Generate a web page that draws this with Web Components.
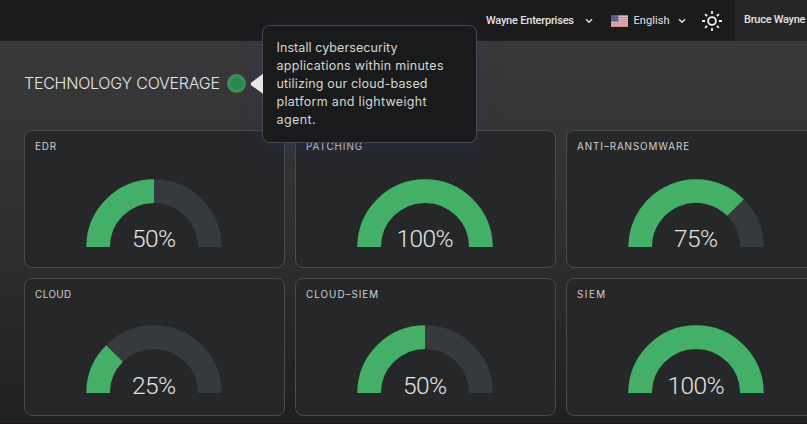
<!DOCTYPE html>
<html lang="en">
<head>
<meta charset="utf-8">
<title>Technology coverage</title>
<style>
html,body{margin:0;height:424px;overflow:hidden;background:#202021}
</style>
</head>
<body>
<coverage-app></coverage-app>
<script>
const define = (name, html, init) => customElements.define(name, class extends HTMLElement {
  connectedCallback() {
    if (this.shadowRoot) return;
    this.attachShadow({ mode: 'open' }).innerHTML = html;
    if (init) init.call(this, this.shadowRoot);
  }
});

// Single line of text whose tracking is tuned so that it fills the given width.
define('fit-text', `<style>:host{display:block;white-space:nowrap;width:max-content}span{display:inline-block}</style><span><slot></slot></span>`,
  function (root) {
    const span = root.querySelector('span');
    const n = this.textContent.length;
    const gap = (Number(this.getAttribute('width')) - span.getBoundingClientRect().width) / (n - 1);
    span.style.letterSpacing = gap.toFixed(3) + 'px';
    span.style.marginRight = (-gap).toFixed(3) + 'px';
  });

define('chevron-icon', `<style>:host{display:block;width:8px;height:6px}svg{display:block}</style>
<svg width="8" height="6" viewBox="0 0 8 6"><path d="M1 1.200 4 4.300 7 1.200" fill="none" stroke="#e2e2e2" stroke-width="1.4"/></svg>`);

define('flag-icon', `<style>:host{display:block;width:17px;height:12px}svg{display:block}</style>
<svg width="17" height="12" viewBox="0 0 17 12"><rect width="17" height="12" rx=".6" fill="#e9dadd"/>
<path d="M0 .5h17M0 2.4h17M0 4.3h17M0 6.2h17M0 8.1h17M0 10h17M0 11.8h17" stroke="#ce6674" stroke-width=".95"/>
<rect width="7.3" height="6.4" fill="#535a87"/><path d="M1 1.4h6M1 3.1h6M1 4.8h6" stroke="#8589aa" stroke-width=".6" stroke-dasharray=".7 .8"/></svg>`);

define('sun-icon', `<style>:host{display:block;width:20px;height:20px}svg{display:block}</style>
<svg width="20" height="20" viewBox="-10 -10 20 20" fill="none" stroke="#f2f2f2" stroke-width="1.8"><circle r="3.900"/>
<path d="M0-10v3M0 7v3M-10 0h3M7 0h3M-6.9-6.9l2 2M4.9 4.9l2 2M6.9-6.9l-2 2M-4.9 4.9l-2 2"/></svg>`);

define('top-bar', `<style>
:host{display:flex;height:41px;box-sizing:border-box;background:#1b1b1b;color:#e4e4e4;font:500 11px/40px Roboto,sans-serif;align-items:center;padding-left:486px}
chevron-icon{margin:1px 0 0 11px}flag-icon{margin-left:18px}.lang{margin-left:5.500px;font-weight:400}.lang+chevron-icon{margin-left:8px}
sun-icon{margin-left:16px}.user{margin-left:13px;flex:1;background:#262626;height:41px;padding-left:9.500px}
</style><fit-text width="88">Wayne Enterprises</fit-text><chevron-icon></chevron-icon><flag-icon></flag-icon>
<fit-text class="lang" width="36">English</fit-text><chevron-icon></chevron-icon><sun-icon></sun-icon>
<div class="user"><fit-text width="61.5">Bruce Wayne</fit-text></div>`);

define('info-tip', `<style>
:host{display:block;position:relative;width:19px;height:19px}
.dot{width:19px;height:19px;border-radius:50%;box-sizing:border-box;border:3px solid #39905a;background:#2e8650}
.arrow{position:absolute;left:23px;top:-1px}
.box{position:absolute;left:35px;top:-49px;width:215px;height:118px;box-sizing:border-box;border:1px solid #48494f;border-radius:8px;background:#191a1b;padding:13px 0 0 13.500px;color:#d8d6d1;font:400 12.5px/18px Inter,sans-serif;box-shadow:0 3px 22px 1px rgba(48,52,140,.27)}
</style><div class="dot"></div><div class="box"><slot></slot></div>
<svg class="arrow" width="13" height="22" viewBox="0 0 13 22"><path d="M13 .8V20.700L1.400 12.400Q0 11 1.400 9.400Z" fill="#e9e7e3"/></svg>`);

define('gauge-card', `<style>
:host{display:flex;flex-direction:column;align-items:center;box-sizing:border-box;height:138px;border:1px solid #4a4b4b;border-radius:8px;background:#262729;color:#d0d0d0}
.label{align-self:flex-start;margin:9px 0 0 10.500px;font:400 9.800px/14px Inter,sans-serif;height:14px}
svg{display:block;margin-top:25px;flex:none}
.value{margin-top:-23px;color:#e3e3e3;font:300 24.500px/30px Roboto,sans-serif}
:host([row="2"]) svg{margin-top:23px}:host([row="2"]) .value{margin-top:-22px}
</style><div class="label"></div>
<svg width="136" height="68" viewBox="-68 -68 136 68" fill="none" stroke-width="23.6"><path d="M-55.900 0A55.900 55.900 0 0 1 55.900 0" stroke="#373a3c"/><path class="on" stroke="#43af67"/></svg>
<div class="value"></div>`, function (root) {
  const v = Number(this.getAttribute('value'));
  const a = Math.PI * (1 - v / 100), r = 55.9;
  root.querySelector('.on').setAttribute('d', `M${-r} 0A${r} ${r} 0 0 1 ${r * Math.cos(a)} ${-r * Math.sin(a)}`);
  root.querySelector('.label').innerHTML = `<fit-text width="${this.getAttribute('label-width')}">${this.getAttribute('label')}</fit-text>`;
  root.querySelector('.value').innerHTML = `<fit-text width="${v === 100 ? 57 : 44}">${v}%</fit-text>`;
});

define('coverage-app', `<style>
:host{display:block;width:807px;height:424px;overflow:hidden}
main{height:383px;box-sizing:border-box;background:linear-gradient(#39393b,#303031 45%,#202021);padding:33px 0 0 24px;border-bottom:1px solid #1c1115}
h1{display:flex;align-items:center;gap:7px;height:19px;margin:0 0 37px;font:300 16px/19px Inter,sans-serif;color:#e6e6e6}
h1 info-tip{z-index:2}
.grid{display:grid;grid-template-columns:repeat(3,261px);gap:10px;margin-left:-.400px}
</style><top-bar></top-bar><main>
<h1><fit-text width="196">TECHNOLOGY COVERAGE</fit-text><info-tip>
<fit-text width="121">Install cybersecurity</fit-text><fit-text width="167">applications within minutes</fit-text><fit-text width="151">utilizing our cloud-based</fit-text><fit-text width="150">platform and lightweight</fit-text><fit-text width="39">agent.</fit-text></info-tip></h1>
<div class="grid">
<gauge-card label="EDR" label-width="21" value="50"></gauge-card>
<gauge-card label="PATCHING" label-width="56" value="100"></gauge-card>
<gauge-card label="ANTI–RANSOMWARE" label-width="112" value="75"></gauge-card>
<gauge-card row="2" label="CLOUD" label-width="36" value="25"></gauge-card>
<gauge-card row="2" label="CLOUD–SIEM" label-width="72" value="50"></gauge-card>
<gauge-card row="2" label="SIEM" label-width="28" value="100"></gauge-card>
</div></main>`);
</script>
</body>
</html>
